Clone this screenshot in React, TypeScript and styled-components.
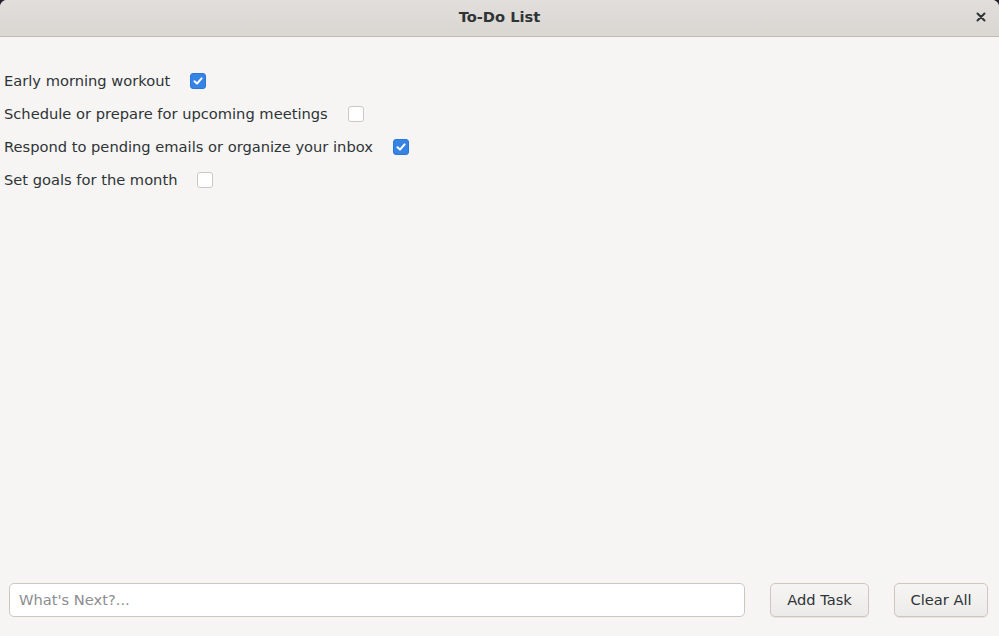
import { useState } from "react";
import styled, { createGlobalStyle } from "styled-components";

const GlobalStyle = createGlobalStyle`
  html, body {
    margin: 0;
    padding: 0;
    background: #241f31;
  }
  body {
    font-family: "DejaVu Sans", "Noto Sans", sans-serif;
    font-size: 14.67px;
    color: #2e3436;
  }
`;

const Window = styled.div`
  display: flex;
  flex-direction: column;
  width: 999px;
  height: 636px;
  overflow: hidden;
  border-radius: 7px 7px 0 0;
  background: #f6f5f4;
`;

const TitleBar = styled.header`
  position: relative;
  display: flex;
  flex: 0 0 auto;
  align-items: center;
  justify-content: center;
  height: 37px;
  padding-bottom: 3px;
  box-sizing: border-box;
  border-bottom: 1px solid #c0bab3;
  background: linear-gradient(#e1dedb, #dad6d2);
`;

const Title = styled.h1`
  margin: 0;
  font-size: 14.67px;
  font-weight: 700;
  color: #2e3436;
`;

const CloseButton = styled.button`
  position: absolute;
  top: 8px;
  right: 9px;
  display: flex;
  align-items: center;
  justify-content: center;
  width: 18px;
  height: 18px;
  padding: 0;
  border: 0;
  background: transparent;
  cursor: pointer;
`;

const TaskList = styled.ul`
  display: flex;
  flex: 1 1 auto;
  flex-direction: column;
  margin: 0;
  padding: 28px 0 0 4px;
  list-style: none;
`;

const TaskRow = styled.li`
  display: flex;
  align-items: center;
  gap: 20px;
  height: 33px;
`;

const TaskLabel = styled.span`
  line-height: 1;
`;

const Check = styled.button<{ $checked: boolean }>`
  display: flex;
  align-items: center;
  justify-content: center;
  width: 16px;
  height: 16px;
  margin-top: -1px;
  padding: 0;
  border: 1px solid ${(p) => (p.$checked ? "#2a76d9" : "#cdc7c2")};
  border-radius: 3px;
  background: ${(p) => (p.$checked ? "#3584e4" : "#ffffff")};
  cursor: pointer;
`;

const Footer = styled.div`
  display: flex;
  flex: 0 0 auto;
  align-items: center;
  gap: 25px;
  padding: 0 11px 19px 9px;
`;

const TaskInput = styled.input`
  flex: 1 1 auto;
  height: 34px;
  box-sizing: border-box;
  padding: 0 9px 2px;
  border: 1px solid #cdc7c2;
  border-radius: 5px;
  background: #ffffff;
  color: #2e3436;
  font: inherit;
  outline: none;

  &::placeholder {
    color: #8b8e8f;
  }
`;

const ActionButton = styled.button<{ $width: number }>`
  width: ${(p) => p.$width}px;
  height: 34px;
  box-sizing: border-box;
  padding: 0 0 2px;
  border: 1px solid #cdc7c2;
  border-radius: 5px;
  background: linear-gradient(#f6f5f4, #edebe9);
  box-shadow: 0 1px rgba(0, 0, 0, 0.07);
  color: #2e3436;
  font: inherit;
  cursor: pointer;
`;

const initialTasks = [
  { text: "Early morning workout", done: true },
  { text: "Schedule or prepare for upcoming meetings", done: false },
  { text: "Respond to pending emails or organize your inbox", done: true },
  { text: "Set goals for the month", done: false },
];

export default function App() {
  const [tasks, setTasks] = useState(initialTasks);
  const [draft, setDraft] = useState("");

  const toggle = (index: number) =>
    setTasks((prev) =>
      prev.map((t, i) => (i === index ? { ...t, done: !t.done } : t)),
    );

  const addTask = () => {
    if (!draft.trim()) return;
    setTasks((prev) => [...prev, { text: draft.trim(), done: false }]);
    setDraft("");
  };

  return (
    <>
      <GlobalStyle />
      <Window>
        <TitleBar>
          <Title>To-Do List</Title>
          <CloseButton aria-label="Close">
            <svg width="10" height="10" viewBox="0 0 10 10">
              <path
                d="M1.5 1.5 L8.5 8.5 M8.5 1.5 L1.5 8.5"
                stroke="#2e3436"
                strokeWidth="2"
                strokeLinecap="round"
              />
            </svg>
          </CloseButton>
        </TitleBar>

        <TaskList>
          {tasks.map((task, i) => (
            <TaskRow key={task.text}>
              <TaskLabel>{task.text}</TaskLabel>
              <Check
                type="button"
                $checked={task.done}
                aria-pressed={task.done}
                onClick={() => toggle(i)}
              >
                {task.done && (
                  <svg width="12" height="12" viewBox="0 0 12 12">
                    <path
                      d="M2.5 6.2 L5 8.6 L9.6 3.4"
                      fill="none"
                      stroke="#ffffff"
                      strokeWidth="2"
                      strokeLinecap="round"
                      strokeLinejoin="round"
                    />
                  </svg>
                )}
              </Check>
            </TaskRow>
          ))}
        </TaskList>

        <Footer>
          <TaskInput
            placeholder="What's Next?..."
            value={draft}
            onChange={(e) => setDraft(e.target.value)}
            onKeyDown={(e) => e.key === "Enter" && addTask()}
          />
          <ActionButton $width={99} onClick={addTask}>
            Add Task
          </ActionButton>
          <ActionButton $width={94} onClick={() => setTasks([])}>
            Clear All
          </ActionButton>
        </Footer>
      </Window>
    </>
  );
}
